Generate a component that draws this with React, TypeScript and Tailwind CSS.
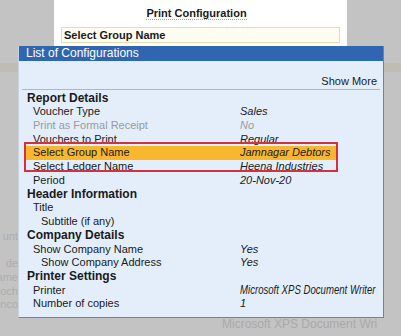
import React from 'react';

type Row = { label: string; value?: string; kind: 'head' | 'item' | 'sub'; dim?: boolean; hl?: boolean; small?: boolean };

const rows: Row[] = [
  { label: 'Report Details', kind: 'head' },
  { label: 'Voucher Type', value: 'Sales', kind: 'item' },
  { label: 'Print as Formal Receipt', value: 'No', kind: 'item', dim: true },
  { label: 'Vouchers to Print', value: 'Regular', kind: 'item' },
  { label: 'Select Group Name', value: 'Jamnagar Debtors', kind: 'item', hl: true },
  { label: 'Select Ledger Name', value: 'Heena Industries', kind: 'item' },
  { label: 'Period', value: '20-Nov-20', kind: 'item' },
  { label: 'Header Information', kind: 'head' },
  { label: 'Title', kind: 'item' },
  { label: 'Subtitle (if any)', kind: 'sub' },
  { label: 'Company Details', kind: 'head' },
  { label: 'Show Company Name', value: 'Yes', kind: 'item' },
  { label: 'Show Company Address', value: 'Yes', kind: 'sub' },
  { label: 'Printer Settings', kind: 'head' },
  { label: 'Printer', value: 'Microsoft XPS Document Writer', kind: 'item', small: true },
  { label: 'Number of copies', value: '1', kind: 'item' },
];

const ghost = ['unt', '', 'de', 'ame', 'och', 'enco'];

export default function App() {
  return (
    <div className="relative w-[401px] h-[336px] overflow-hidden bg-[#c3c3c3] font-['Liberation_Sans',Arial,sans-serif] text-[#1a1a1a]">
      {/* background form */}
      <div className="ml-[54px] w-[293px] h-[46px] bg-white flex flex-col">
        <div className="pt-[6px] pr-[8px] text-center text-[11px] font-bold leading-[14px]">
          <span className="border-b border-dotted border-[#9aa4b0]">Print Configuration</span>
        </div>
        <div className="mt-[7px] ml-[7px] w-[279px] h-[16px] bg-[#fffdf2] border border-[#e6dbb2] pl-[2px] text-[11px] font-bold leading-[14px]">
          Select Group Name
        </div>
      </div>
      <div className="mt-[17px] h-[9px] bg-[#bebdb1]" />
      <div className="mt-[158px] flex flex-col w-[18px] overflow-hidden items-end text-[11px] leading-[13.7px] text-[#adadad]">
        {ghost.map((g, i) => (
          <div key={i} className="h-[13.7px] whitespace-nowrap">{g}</div>
        ))}
      </div>
      <div className="mt-[4px] ml-[222px] whitespace-nowrap text-[12px] leading-[16px] text-[#a9a9a9]">
        Microsoft XPS Document Wri
      </div>

      {/* popup */}
      <div className="absolute left-[18px] top-[46px] w-[366px] h-[272px] flex flex-col bg-[#e3eefa] border-r border-b border-[#7d8186] border-l border-l-[#c9d3de]">
        <div className="h-[15px] bg-[#2f65b1] text-white text-[12px] leading-[15px] pl-[7px]">List of Configurations</div>
        <div className="h-[28px] flex items-end justify-end pr-[6px] text-[11px] leading-[14px] pb-[1px]">Show More</div>
        <div className="mx-[3px] h-px bg-[#aeb8c4]" />
        <div className="flex flex-col pt-px">
          {rows.map((r, i) => (
            <div
              key={i}
              className={`flex h-[13.73px] items-center whitespace-nowrap ml-[6px] ${r.hl ? 'bg-[#f9b72f] mr-[47px]' : ''}`}
            >
              <div
                className={`w-[215px] shrink-0 ${
                  r.kind === 'head'
                    ? 'pl-[2px] text-[12px] font-bold'
                    : r.kind === 'sub'
                    ? 'pl-[16px] text-[11px]'
                    : 'pl-[8px] text-[11px]'
                } ${r.dim ? 'text-[#9a9a9a]' : ''}`}
              >
                {r.label}
              </div>
              {r.value && (
                <div
                  className={`italic ${r.dim ? 'text-[#9a9a9a]' : ''} ${
                    r.small ? 'text-[12px] origin-left scale-x-[0.8]' : 'text-[11px]'
                  }`}
                >
                  {r.value}
                </div>
              )}
            </div>
          ))}
        </div>
      </div>

      {/* annotation box */}
      <div className="absolute left-[24px] top-[142px] w-[314px] h-[30px] border-2 border-[#d3323c]" />
    </div>
  );
}
